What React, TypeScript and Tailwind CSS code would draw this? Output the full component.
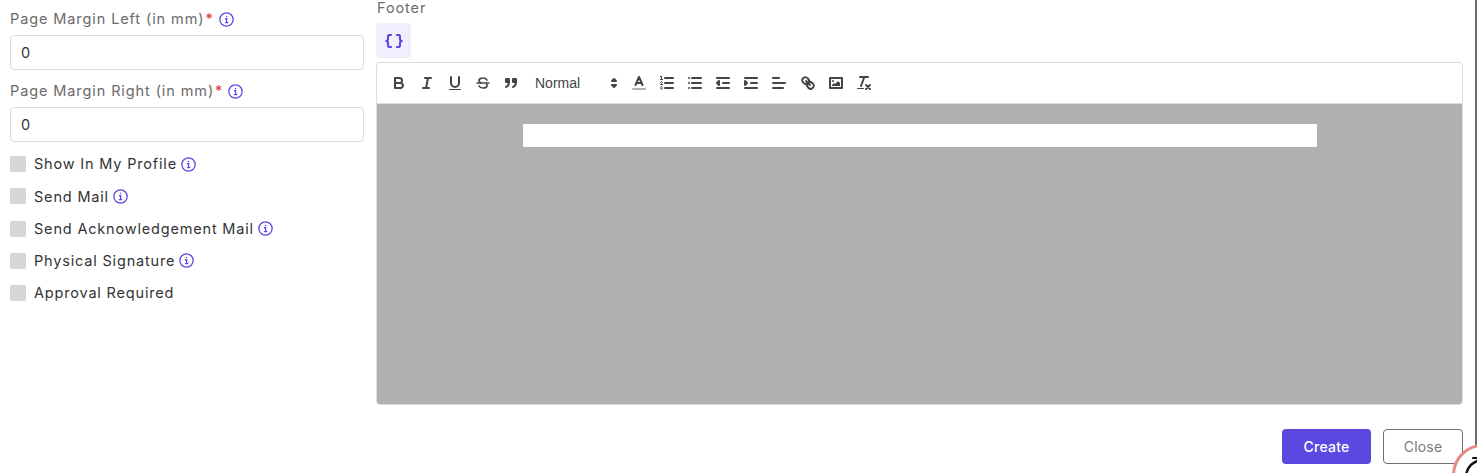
import type { ReactNode } from "react";

function InfoIcon() {
  return (
    <svg viewBox="0 0 14 14" className="h-[15px] w-[15px] shrink-0" fill="none" stroke="#5b48e0" strokeWidth="1.2" strokeLinecap="round">
      <circle cx="7" cy="7" r="6.2" />
      <path d="M6 6.3h1.1v3.6M6 9.9h2.2" />
      <circle cx="7" cy="4.1" r="0.7" fill="#5b48e0" stroke="none" />
    </svg>
  );
}

function Label({ text }: { text: string }) {
  return (
    <div className="flex h-[20px] items-center text-[14.5px] tracking-[0.9px] text-[#6b6b6b]">
      <span>{text}</span>
      <span className="ml-[1px] text-[#e0352b]">*</span>
      <span className="ml-[5px]">
        <InfoIcon />
      </span>
    </div>
  );
}

function Field({ text }: { text: string }) {
  return (
    <div>
      <Label text={text} />
      <div className="mt-[6px] flex h-[35px] items-center rounded-[4px] border border-[#dcdcdc] px-[10px] text-[14.5px] text-[#333333]">0</div>
    </div>
  );
}

function Check({ text, info }: { text: string; info?: boolean }) {
  return (
    <div className="flex h-[32.25px] items-center text-[14.5px] tracking-[0.82px] text-[#333333]">
      <span className="mr-2 h-4 w-4 rounded-[2px] bg-[#d6d6d6]" />
      <span>{text}</span>
      {info && (
        <span className="ml-[4px]">
          <InfoIcon />
        </span>
      )}
    </div>
  );
}

function Tool({ children }: { children: ReactNode }) {
  return (
    <span className="flex h-6 w-7 items-center justify-center">
      <svg viewBox="0 0 18 18" className="h-[18px] w-[18px]" fill="none" stroke="#444444" strokeWidth="2" strokeLinecap="round" strokeLinejoin="round">
        {children}
      </svg>
    </span>
  );
}

function Toolbar() {
  return (
    <div className="flex h-[41px] items-center border-b border-[#dcdcdc] px-2 font-['Liberation_Sans',sans-serif]">
      <Tool>
        <path d="M5,4H9.5A2.5,2.5,0,0,1,12,6.5v0A2.5,2.5,0,0,1,9.5,9H5V4Z" />
        <path d="M5,9h5.5A2.5,2.5,0,0,1,13,11.5v0A2.5,2.5,0,0,1,10.5,14H5V9Z" />
      </Tool>
      <Tool>
        <path d="M7,4H13M5,14H11M8,14L10,4" />
      </Tool>
      <Tool>
        <path d="M5,3V9a4,4,0,0,0,4,4h0a4,4,0,0,0,4-4V3" />
        <rect x="3" y="15" width="12" height="1" rx="0.5" fill="#444444" stroke="none" />
      </Tool>
      <Tool>
        <path d="M3,9H15" strokeWidth="1.4" />
        <path d="M12.9,6A4,3 0 0 0 9,4C7,4,5,5,5,6.5C5,7.5,5.6,8.2,6.5,8.6" strokeWidth="1.7" />
        <path d="M5.1,12A4,3 0 0 0 9,14C11,14,13,13,13,11.5C13,11,12.9,10.6,12.6,10.2" strokeWidth="1.7" />
      </Tool>
      <Tool>
        <rect x="4" y="5" width="3" height="3" fill="#444444" />
        <rect x="11" y="5" width="3" height="3" fill="#444444" />
        <path d="M7,8c0,4-3,5-3,5" fill="#444444" />
        <path d="M14,8c0,4-3,5-3,5" fill="#444444" />
      </Tool>
      <div className="flex h-6 w-[100px] items-center justify-between pl-[10px] pr-[2px] text-sm text-[#444444]">
        <span>Normal</span>
        <svg viewBox="0 0 18 18" className="h-[18px] w-[18px]" fill="#444444" stroke="#444444" strokeWidth="2" strokeLinejoin="round">
          <polygon points="7 11 9 13 11 11 7 11" />
          <polygon points="7 7 9 5 11 7 7 7" />
        </svg>
      </div>
      <Tool>
        <path d="M3,15H15" stroke="#b0b0b0" />
        <path d="M5.5,11L9,3L12.5,11M11.6,9H6.4" />
      </Tool>
      <Tool>
        <path d="M7,4H15M7,9H15M7,14H15" />
        <path d="M2.4,2.6L3.5,2.1V5.5M2.5,5.5H4.5M2.5,8.2A1,1,0,0,1,4.3,8.3C4.3,9.4,2.5,9.8,2.5,10.5H4.5M2.5,13.1A1,1,0,0,1,4.3,13.3A.7,.7,0,0,1,3.7,14A.7,.7,0,0,1,4.3,14.7A1,1,0,0,1,2.5,14.8" strokeWidth="1" />
      </Tool>
      <Tool>
        <path d="M6,4H15M6,9H15M6,14H15M3,4H3M3,9H3M3,14H3" />
      </Tool>
      <Tool>
        <path d="M3,14H15M3,4H15M9,9H15" />
        <polygon points="5 7 5 11 3 9 5 7" fill="#444444" />
      </Tool>
      <Tool>
        <path d="M3,14H15M3,4H15M9,9H15" />
        <polygon points="3 7 3 11 5 9 3 7" fill="#444444" />
      </Tool>
      <Tool>
        <path d="M3,9H15M3,14H13M3,4H9" />
      </Tool>
      <span className="ml-px flex">
        <Tool>
          <path d="M7,7L11,11" />
          <path d="M8.9,4.577a3.476,3.476,0,0,1,.36,4.679A3.476,3.476,0,0,1,4.577,8.9C3.185,7.5,2.035,6.4,4.217,4.217S7.5,3.185,8.9,4.577Z" />
          <path d="M13.423,9.1a3.476,3.476,0,0,0-4.679-.36,3.476,3.476,0,0,0,.36,4.679c1.392,1.392,2.5,2.542,4.679.36S14.815,10.5,13.423,9.1Z" />
        </Tool>
        <Tool>
          <rect x="3" y="4" width="12" height="10" />
          <circle cx="6" cy="7" r="1" fill="#444444" stroke="none" />
          <polygon points="5 12 5 11 7 9 8 10 11 7 13 9 13 12 5 12" fill="#444444" stroke="none" />
        </Tool>
        <Tool>
          <path d="M5,3H13M6,12L9.35,3M11,11L15,15M15,11L11,15" />
          <rect x="2" y="14" width="7" height="1" rx="0.5" fill="#444444" stroke="none" />
        </Tool>
      </span>
    </div>
  );
}

export default function App() {
  return (
    <div className="relative flex h-[473px] w-[1477px] overflow-hidden bg-white font-['Inter',sans-serif]">
      <div className="flex flex-1 gap-[12px] pl-[10px] pr-[12px]">
        <div className="w-[354px] shrink-0 pt-[9px]">
          <Field text="Page Margin Left (in mm)" />
          <div className="mt-[11px]">
            <Field text="Page Margin Right (in mm)" />
          </div>
          <div className="mt-[6px]">
            <Check text="Show In My Profile" info />
            <Check text="Send Mail" info />
            <Check text="Send Acknowledgement Mail" info />
            <Check text="Physical Signature" info />
            <Check text="Approval Required" />
          </div>
        </div>
        <div className="flex min-w-0 flex-1 flex-col">
          <div className="flex h-[16px] items-center pl-px text-[14.5px] tracking-[0.9px] text-[#6b6b6b]">Footer</div>
          <div className="mt-[7px] flex h-[35px] w-[35px] items-center justify-center rounded-[4px] bg-[#f1effd]">
            <svg viewBox="0 0 18 14" className="h-[14px] w-[18px]" fill="none" stroke="#5b48e0" strokeWidth="2.1" strokeLinecap="round" strokeLinejoin="round">
              <path d="M6,1H4.5A1.5,1.5,0,0,0,3,2.5V5A2,2,0,0,1,1.2,7A2,2,0,0,1,3,9V11.5A1.5,1.5,0,0,0,4.5,13H6" />
              <path d="M12,1H13.5A1.5,1.5,0,0,1,15,2.5V5A2,2,0,0,0,16.8,7A2,2,0,0,0,15,9V11.5A1.5,1.5,0,0,1,13.5,13H12" />
            </svg>
          </div>
          <div className="mt-[4px] flex h-[343px] flex-col overflow-hidden rounded-[4px] border border-[#dcdcdc]">
            <Toolbar />
            <div className="flex-1 bg-[#b0b0b0] pt-[20px]">
              <div className="mx-auto h-[23px] w-[794px] bg-white" />
            </div>
          </div>
          <div className="mt-[24px] flex justify-end gap-[12px]">
            <button type="button" className="h-[35px] w-[89px] rounded-[4px] bg-[#5b48e0] text-sm font-medium tracking-[0.2px] text-white">
              Create
            </button>
            <button type="button" className="h-[35px] w-[80px] rounded-[4px] border border-[#707070] text-sm tracking-[0.2px] text-[#7a7a7a]">
              Close
            </button>
          </div>
        </div>
      </div>
      <div className="w-[2px] shrink-0 bg-[#6e6e6e]" />
      <svg viewBox="0 0 62 62" className="absolute left-[1452px] top-[444px] h-[62px] w-[62px]" fill="none">
        <circle cx="31" cy="31" r="29.5" fill="#ffffff" stroke="#e58a84" strokeWidth="3" />
        <circle cx="31" cy="33" r="17" stroke="#111111" strokeWidth="2.5" />
        <path d="M21,14H25" stroke="#111111" strokeWidth="2" strokeLinecap="round" />
      </svg>
    </div>
  );
}
